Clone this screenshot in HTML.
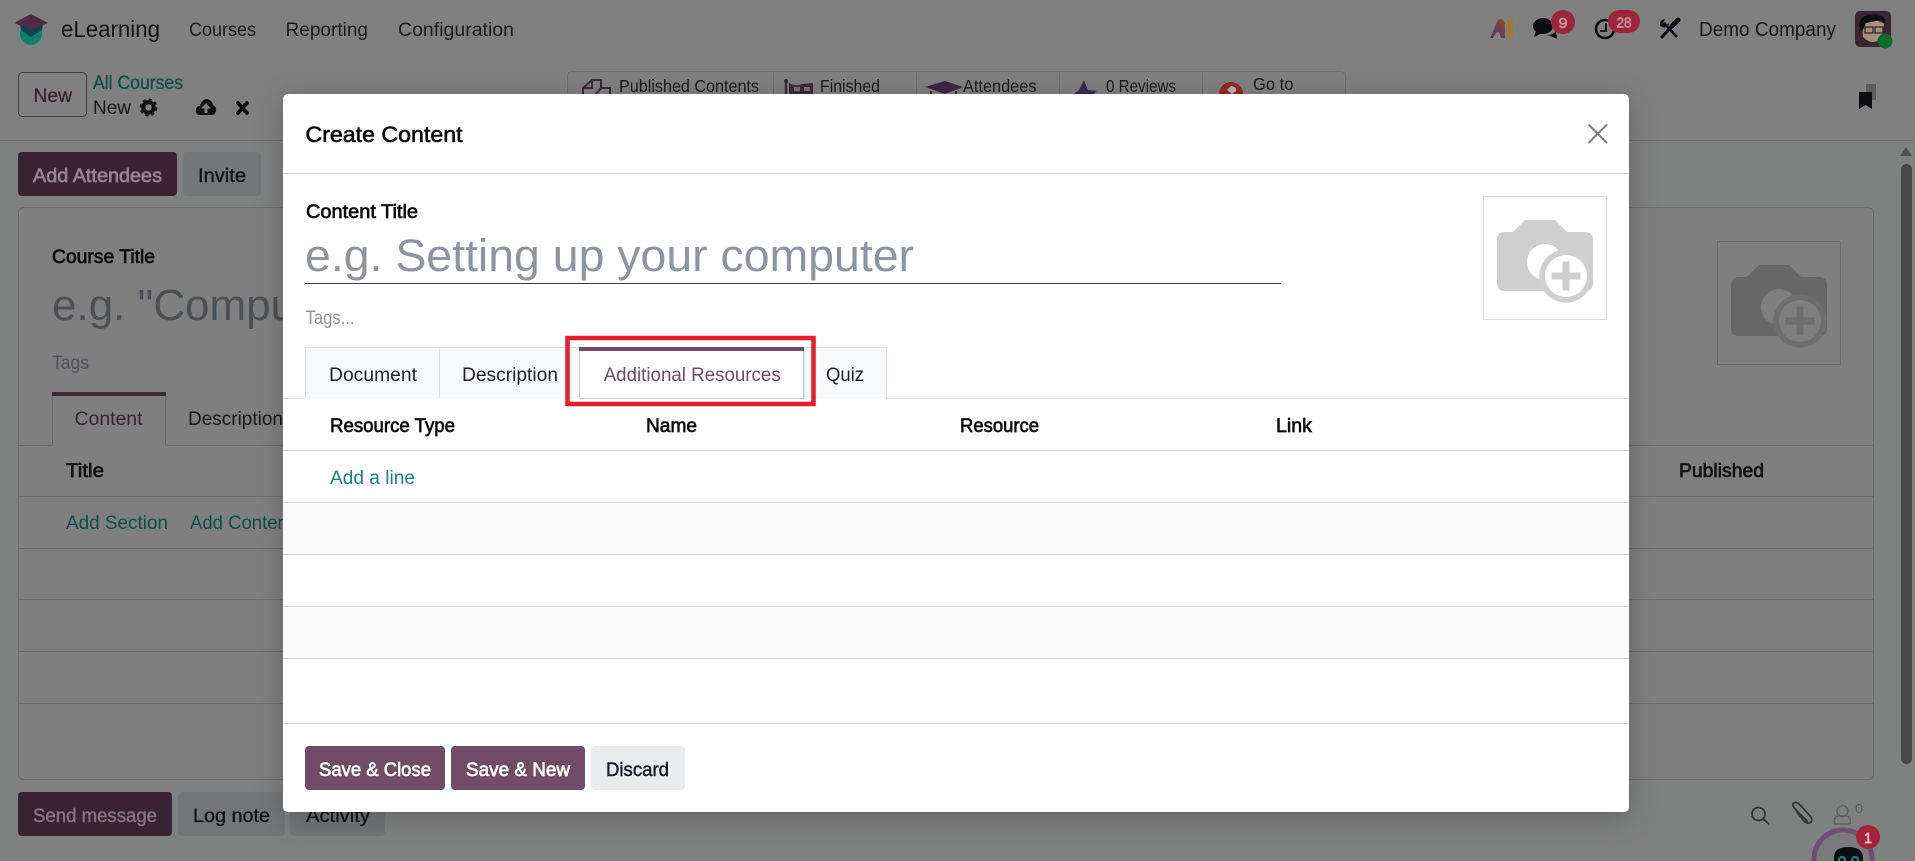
<!DOCTYPE html>
<html lang="en">
<head>
<meta charset="utf-8">
<title>Create Content</title>
<style>
html,body{margin:0;padding:0;width:1915px;height:861px;overflow:hidden;background:#7f8080}
svg{display:block}
text{font-family:"Liberation Sans",sans-serif;font-size:19px;fill:currentColor;color:#111}
.b{stroke:currentColor;stroke-width:.65px}
.w{color:#fff}
.teal{color:#0c4f48}
</style>
</head>
<body>
<svg width="1915" height="861" viewBox="0 0 1915 861" xmlns="http://www.w3.org/2000/svg">
<defs>
<filter id="sh" x="-10%" y="-10%" width="120%" height="125%"><feDropShadow dx="0" dy="6" stdDeviation="14" flood-color="#000" flood-opacity=".22"/></filter>
<linearGradient id="aig" x1="0" y1="1" x2="1" y2="0"><stop offset="0" stop-color="#5a3563"/><stop offset=".55" stop-color="#6d404e"/><stop offset="1" stop-color="#945626"/></linearGradient>
</defs>

<!-- page background -->
<rect width="1915" height="861" fill="#7f8080"/>
<rect width="1915" height="140" fill="#808080"/>
<rect y="140" width="1915" height="1" fill="#6c6c6c"/>

<!-- logo -->
<circle cx="31" cy="34" r="11" fill="#0f7f6d"/>
<path d="M20 24 H43 L42 30 L31 37 L21 30Z" fill="#0c4450"/>
<polygon points="14,23 31,14 48,23 31,30" fill="#4f2b49"/>

<text x="61" y="37" textLength="99" lengthAdjust="spacingAndGlyphs" style="font-size:23px;color:#141414">eLearning</text>
<text x="189" y="36" textLength="67" lengthAdjust="spacingAndGlyphs" style="color:#1c1c1c">Courses</text>
<text x="285.500" y="36" textLength="82.500" lengthAdjust="spacingAndGlyphs" style="color:#1c1c1c">Reporting</text>
<text x="398" y="36" textLength="116" lengthAdjust="spacingAndGlyphs" style="color:#1c1c1c">Configuration</text>

<!-- AI logo -->
<path d="M1490 38 L1498 20 Q1501 18 1503 20 L1505 23 V38 L1501 38 L1499 32 Q1495 32 1493 38Z" fill="url(#aig)"/>
<rect x="1508" y="20" width="5" height="18" fill="#a07c24"/>
<!-- chat -->
<ellipse cx="1543" cy="26" rx="10" ry="8" fill="#0b0d12"/>
<path d="M1536 31 L1534 37 L1542 33Z" fill="#0b0d12"/>
<path d="M1547 35 Q1553 35 1556 31 L1557 39 L1551 36Z" fill="#0b0d12"/>
<circle cx="1563" cy="22" r="12" fill="#9c2638"/>
<text x="1558.500" y="28" textLength="9" lengthAdjust="spacingAndGlyphs" class="b" style="font-size:15px;color:#bd949c">9</text>
<!-- clock -->
<circle cx="1605" cy="29" r="9" fill="none" stroke="#0b0d12" stroke-width="2.600"/>
<path d="M1606 23 V31 H1600" fill="none" stroke="#0b0d12" stroke-width="1.800"/>
<rect x="1608" y="10" width="32" height="23" rx="11.500" fill="#9c2638"/>
<text x="1616.500" y="27.500" textLength="15" lengthAdjust="spacingAndGlyphs" class="b" style="font-size:15px;color:#bd949c">28</text>
<!-- tools -->
<path d="M1664 23 L1677 37" stroke="#0b0d12" stroke-width="2.600" fill="none"/>
<path d="M1660 26 Q1659 20 1665 19 L1663.500 22.500 L1666 25 L1669 23.500 Q1668 29 1662 27Z" fill="#0b0d12"/>
<path d="M1672 26 L1661 38" stroke="#0b0d12" stroke-width="3" fill="none"/>
<path d="M1672 26 L1678 20" stroke="#0b0d12" stroke-width="5" stroke-linecap="round" fill="none"/>
<text x="1699" y="36" textLength="137" lengthAdjust="spacingAndGlyphs" style="font-size:20px;color:#1a1a1a">Demo Company</text>
<!-- avatar -->
<rect x="1855" y="11" width="36" height="36" rx="5" fill="#3a2535"/>
<path d="M1862 24 Q1872 16 1884 24 L1883 37 Q1873 47 1863 37Z" fill="#a8907c"/>
<path d="M1859 26 Q1860 14 1872 15 Q1885 13 1886 24 L1881 20 L1866 23 L1862 32Z" fill="#0e0e0e"/>
<rect x="1865" y="27" width="8" height="6" fill="none" stroke="#222" stroke-width="1.200"/>
<rect x="1875" y="27" width="8" height="6" fill="none" stroke="#222" stroke-width="1.200"/>
<circle cx="1885" cy="41" r="7.500" fill="#0a6b26"/>

<!-- control panel -->
<rect x="18.500" y="72.500" width="68" height="44" rx="4" fill="none" stroke="#3e3e3e"/>
<text x="33.500" y="102" textLength="38.500" lengthAdjust="spacingAndGlyphs" class="b" style="color:#38242f;stroke-width:.3px">New</text>
<text x="93" y="89" textLength="90" lengthAdjust="spacingAndGlyphs" class="b teal" style="stroke-width:.3px">All Courses</text>
<text x="93" y="114" textLength="38" lengthAdjust="spacingAndGlyphs" style="font-size:19.500px;color:#151515">New</text>
<!-- gear -->
<circle cx="148.500" cy="107.500" r="5.200" fill="none" stroke="#111" stroke-width="4"/>
<circle cx="148.500" cy="107.500" r="7.800" fill="none" stroke="#111" stroke-width="2.400" stroke-dasharray="3.200 2.900"/>
<!-- cloud -->
<path d="M199 115 Q195 114 196 109 Q197 106 200 106 Q202 99 207 99 Q212 100 213 105 Q217 107 216 111 Q215 115 212 115Z" fill="#111"/>
<path d="M206 103 L201 108.500 H204.500 V113 H207.500 V108.500 H211Z" fill="#808080"/>
<!-- x -->
<path d="M238 103 L247 113 M247 103 L238 113" stroke="#111" stroke-width="3.800" stroke-linecap="round"/>

<!-- stat buttons -->
<rect x="567.500" y="71.500" width="778" height="40" rx="4" fill="none" stroke="#6c6c6c"/>
<path d="M773.500 72V100 M916.500 72V100 M1059.500 72V100 M1202.500 72V100" stroke="#6c6c6c"/>
<text x="619" y="92" textLength="140" lengthAdjust="spacingAndGlyphs" style="font-size:17.500px;color:#1a1a1a">Published Contents</text>
<text x="820" y="92" textLength="60" lengthAdjust="spacingAndGlyphs" style="font-size:17.500px;color:#1a1a1a">Finished</text>
<text x="963" y="92" textLength="73.500" lengthAdjust="spacingAndGlyphs" style="font-size:17.500px;color:#1a1a1a">Attendees</text>
<text x="1106" y="92" textLength="70" lengthAdjust="spacingAndGlyphs" style="font-size:17.500px;color:#1a1a1a">0 Reviews</text>
<text x="1253" y="90" textLength="40.500" lengthAdjust="spacingAndGlyphs" style="font-size:17.500px;color:#1a1a1a">Go to</text>
<!-- published icon -->
<path d="M583 96 V88 L592 80 H601 V88 L596 94 V96 M592 80 L592 88 H583 M601 88 H610 V96" fill="none" stroke="#3a2936" stroke-width="2"/>
<!-- flag -->
<path d="M786 81 V96" stroke="#3a2936" stroke-width="2.400"/>
<circle cx="786" cy="81" r="2" fill="#3a2936"/>
<path d="M789 83 Q796 87 802 84 L813 83 V96 H789Z" fill="#3a2936"/>
<rect x="794" y="87" width="6" height="4" fill="#757575"/><rect x="804" y="87" width="6" height="4" fill="#757575"/>
<!-- mortarboard -->
<path d="M925 87 L945 81 L963 87 L945 94Z" fill="#3a2641"/>
<path d="M931 96 V91 M956 96 V91" stroke="#3a2641" stroke-width="2"/>
<!-- star -->
<path d="M1084 80 L1088 90 L1097 91 L1091 96 H1071 L1079 90Z" fill="#3a2a50"/>
<!-- globe -->
<circle cx="1231" cy="94" r="12" fill="#8f2b24"/>
<path d="M1231 86 Q1237 87 1236 91 L1232 94 L1227 90Z" fill="#b9b4ac"/>
<!-- bookmark -->
<rect x="1866" y="84" width="10" height="16" fill="#5c5c5c"/>
<path d="M1859 92 H1872 V109 L1865.500 105 L1859 109Z" fill="#0c0c10"/>

<!-- action buttons -->
<rect x="18" y="152" width="159" height="44" rx="4" fill="#3a2432"/>
<text x="33" y="182" textLength="129" lengthAdjust="spacingAndGlyphs" class="b" style="color:#948592">Add Attendees</text>
<rect x="183" y="152" width="78" height="44" rx="4" fill="#747679"/>
<text x="198" y="182" textLength="48" lengthAdjust="spacingAndGlyphs" class="b" style="color:#141414;stroke-width:.4px">Invite</text>

<!-- scrollbar -->
<path d="M1906 147 L1912 156 H1900Z" fill="#505050"/>
<rect x="1901" y="164" width="11" height="600" rx="5.500" fill="#474747"/>

<!-- sheet -->
<rect x="18.500" y="207.500" width="1855" height="572" rx="5" fill="#7f7f7f" stroke="#6b6b6b"/>
<text x="52" y="263" textLength="103" lengthAdjust="spacingAndGlyphs" class="b" style="color:#0c0c0c">Course Title</text>
<text x="52" y="320" style="font-size:44px;color:#4b5056">e.g. "Computer</text>
<text x="52" y="369" textLength="37" lengthAdjust="spacingAndGlyphs" style="color:#4f5256">Tags</text>
<rect x="52" y="392" width="114" height="53" fill="#7f7f7f"/>
<path d="M52.500 445V393 M165.500 445V393" stroke="#6b6b6b"/>
<rect x="52" y="392" width="114" height="4" fill="#3e2a39"/>
<text x="74.500" y="425" textLength="68" lengthAdjust="spacingAndGlyphs" style="color:#35242f">Content</text>
<text x="188" y="425" textLength="95" lengthAdjust="spacingAndGlyphs" style="color:#171717">Description</text>
<path d="M19 445.500H52 M166 445.500H1873 M19 496.500H1873 M19 548.500H1873 M19 599.500H1873 M19 651.500H1873 M19 703.500H1873" stroke="#6b6b6b"/>
<text x="66" y="477" textLength="38" lengthAdjust="spacingAndGlyphs" class="b" style="color:#101010">Title</text>
<text x="1679" y="477" textLength="85" lengthAdjust="spacingAndGlyphs" class="b" style="color:#101010">Published</text>
<text x="66" y="529" textLength="102" lengthAdjust="spacingAndGlyphs" style="color:#0c4f48">Add Section</text>
<text x="190" y="529" textLength="103" lengthAdjust="spacingAndGlyphs" style="color:#0c4f48">Add Content</text>
<!-- bg image -->
<rect x="1717.500" y="241.500" width="123" height="123" fill="none" stroke="#6a6a6a"/>
<g transform="translate(1717,241)">
<path d="M22 36 H30 L42 24 H72 L84 36 H102 Q110 36 110 44 V87 Q110 95 102 95 H22 Q14 95 14 87 V44 Q14 36 22 36Z" fill="#676767"/>
<circle cx="62" cy="66" r="18" fill="#7f7f7f"/>
<circle cx="83" cy="80" r="26.700" fill="#6d6d6d"/>
<circle cx="83" cy="80" r="21" fill="#7f7f7f"/>
<path d="M68.500 80H97.500 M83 65.500V94.500" stroke="#6d6d6d" stroke-width="7"/>
</g>

<!-- chatter -->
<rect x="18" y="792" width="154" height="44" rx="4" fill="#3a2432"/>
<text x="33" y="822" textLength="124" lengthAdjust="spacingAndGlyphs" class="b" style="color:#867684;stroke-width:.4px">Send message</text>
<rect x="178" y="792" width="107" height="44" rx="4" fill="#737578"/>
<text x="193" y="822" textLength="77" lengthAdjust="spacingAndGlyphs" class="b" style="color:#111;stroke-width:.3px">Log note</text>
<rect x="290" y="792" width="95" height="44" rx="4" fill="#737578"/>
<text x="306" y="822" textLength="64" lengthAdjust="spacingAndGlyphs" class="b" style="color:#111;stroke-width:.3px">Activity</text>
<circle cx="1758.500" cy="814" r="6.500" fill="none" stroke="#333" stroke-width="1.800"/>
<path d="M1763 819 L1769 824" stroke="#333" stroke-width="2"/>
<path d="M1808 822 L1795 809 Q1791 804 1794 803 Q1797 801 1801 806 L1811 817 Q1813 821 1810 823 Q1807 824 1804 821 L1796 811" fill="none" stroke="#333" stroke-width="1.700"/>
<circle cx="1842.500" cy="811" r="5.500" fill="none" stroke="#5f5f5f" stroke-width="1.500"/>
<path d="M1835 824 Q1833 816 1839 816 H1846 Q1852 816 1850 824Z" fill="none" stroke="#5f5f5f" stroke-width="1.500"/>
<text x="1855" y="813" textLength="8" lengthAdjust="spacingAndGlyphs" style="font-size:13px;color:#5a5a5a">0</text>
<!-- bot -->
<circle cx="1843" cy="859" r="29" fill="#7a7a7c" stroke="#6c5070" stroke-width="5"/>
<path d="M1834 861 V858 Q1834 847 1848 847 Q1863 847 1863 858 V861Z" fill="#0a0d10"/>
<circle cx="1842" cy="860" r="3" fill="none" stroke="#0e8f86" stroke-width="2"/>
<circle cx="1855" cy="860" r="3" fill="none" stroke="#0e8f86" stroke-width="2"/>
<circle cx="1868" cy="837" r="12" fill="#a3243a"/>
<text x="1864" y="843" textLength="8" lengthAdjust="spacingAndGlyphs" class="b" style="font-size:15px;color:#e8c8cd">1</text>

<!-- MODAL -->
<rect x="283" y="94" width="1346" height="718" rx="5" fill="#fff" filter="url(#sh)"/>
<rect x="283" y="173" width="1346" height="1" fill="#dcdcdc"/>
<text x="305.500" y="142" textLength="157" lengthAdjust="spacingAndGlyphs" class="b" style="font-size:22.500px;color:#0b0b0b;stroke-width:.6px">Create Content</text>
<path d="M1588.500 124.500 L1607 143 M1607 124.500 L1588.500 143" stroke="#7d7d7d" stroke-width="2" fill="none"/>

<text x="306" y="218" textLength="112" lengthAdjust="spacingAndGlyphs" class="b" style="color:#0b0b0b">Content Title</text>
<text x="305" y="271" textLength="609" lengthAdjust="spacingAndGlyphs" style="font-size:45px;color:#8e95a0">e.g. Setting up your computer</text>
<rect x="305" y="283" width="976" height="1" fill="#3a3a3a"/>
<text x="305.500" y="324" textLength="49" lengthAdjust="spacingAndGlyphs" style="color:#8f949a">Tags...</text>

<!-- image box -->
<rect x="1483.500" y="196.500" width="123" height="123" fill="#fff" stroke="#dcdcdc"/>
<g transform="translate(1483,196)">
<path d="M22 36 H30 L42 24 H72 L84 36 H102 Q110 36 110 44 V87 Q110 95 102 95 H22 Q14 95 14 87 V44 Q14 36 22 36Z" fill="#cfcfcf"/>
<circle cx="62" cy="66" r="18" fill="#fff"/>
<circle cx="83" cy="80" r="26.700" fill="#d0d0d0"/>
<circle cx="83" cy="80" r="21" fill="#fff"/>
<path d="M68.500 80H97.500 M83 65.500V94.500" stroke="#cfcfcf" stroke-width="7"/>
</g>

<!-- tabs -->
<rect x="305.500" y="347.500" width="134" height="51" fill="#f8f9fa" stroke="#dee2e6"/>
<rect x="439.500" y="347.500" width="140" height="51" fill="#f8f9fa" stroke="#dee2e6"/>
<rect x="804.500" y="347.500" width="82" height="51" fill="#f8f9fa" stroke="#dee2e6"/>
<rect x="283" y="398" width="1346" height="1" fill="#dee2e6"/>
<rect x="305" y="398" width="135" height="1" fill="#f8f9fa"/>
<rect x="440" y="398" width="139" height="1" fill="#f8f9fa"/>
<rect x="805" y="398" width="81" height="1" fill="#f8f9fa"/>
<rect x="579.500" y="348.500" width="224" height="50" fill="#fff" stroke="#cfcfd2"/>
<rect x="579" y="347" width="225" height="4" fill="#71496b"/>
<text x="329" y="381" textLength="88" lengthAdjust="spacingAndGlyphs" style="color:#1c2129">Document</text>
<text x="462" y="381" textLength="96" lengthAdjust="spacingAndGlyphs" style="color:#1c2129">Description</text>
<text x="603.700" y="381" textLength="177" lengthAdjust="spacingAndGlyphs" style="color:#6f4c67">Additional Resources</text>
<text x="826" y="381" textLength="38" lengthAdjust="spacingAndGlyphs" style="color:#1c2129">Quiz</text>
<!-- red highlight -->
<rect x="567.500" y="338" width="246" height="66" fill="none" stroke="#e41e2b" stroke-width="4.500"/>

<!-- table -->
<text x="330" y="432" textLength="125" lengthAdjust="spacingAndGlyphs" class="b" style="color:#0c0c0c">Resource Type</text>
<text x="646" y="432" textLength="51" lengthAdjust="spacingAndGlyphs" class="b" style="color:#0c0c0c">Name</text>
<text x="960" y="432" textLength="79" lengthAdjust="spacingAndGlyphs" class="b" style="color:#0c0c0c">Resource</text>
<text x="1276" y="432" textLength="36" lengthAdjust="spacingAndGlyphs" class="b" style="color:#0c0c0c">Link</text>
<rect x="283" y="450" width="1346" height="1" fill="#dcdcdc"/>
<text x="330" y="484" textLength="85" lengthAdjust="spacingAndGlyphs" style="color:#1b827c">Add a line</text>
<rect x="283" y="502" width="1346" height="52" fill="#fbfbfb"/>
<rect x="283" y="606" width="1346" height="52" fill="#fbfbfb"/>
<rect x="283" y="502" width="1346" height="1" fill="#dcdcdc"/>
<rect x="283" y="554" width="1346" height="1" fill="#dcdcdc"/>
<rect x="283" y="606" width="1346" height="1" fill="#dcdcdc"/>
<rect x="283" y="658" width="1346" height="1" fill="#dcdcdc"/>
<rect x="283" y="723" width="1346" height="1" fill="#dcdcdc"/>

<!-- footer -->
<rect x="305" y="746" width="140" height="44" rx="4" fill="#714b67"/>
<text x="319" y="776" textLength="112" lengthAdjust="spacingAndGlyphs" class="b w">Save &amp; Close</text>
<rect x="451" y="746" width="134" height="44" rx="4" fill="#714b67"/>
<text x="466" y="776" textLength="104" lengthAdjust="spacingAndGlyphs" class="b w">Save &amp; New</text>
<rect x="591" y="746" width="94" height="44" rx="4" fill="#e9ebef"/>
<text x="606" y="776" textLength="63" lengthAdjust="spacingAndGlyphs" class="b" style="color:#111827;stroke-width:.45px">Discard</text>
</svg>
</body>
</html>
